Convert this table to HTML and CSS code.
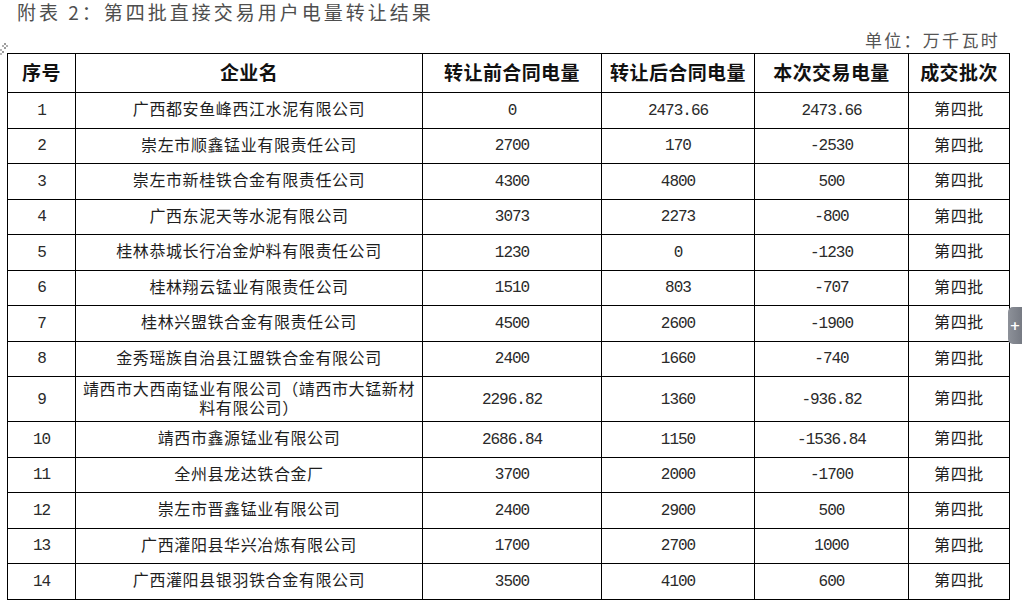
FILE: index.html
```html
<!DOCTYPE html>
<html lang="zh-CN">
<head>
<meta charset="utf-8">
<title>附表2</title>
<link rel="stylesheet" href="styles.css">
</head>
<body>
<div class="page">
  <h1 class="title">附表 2：第四批直接交易用户电量转让结果</h1>
  <div class="unit">单位：万千瓦时</div>
  <div class="table-wrap">
    <span class="handle" aria-hidden="true">
      <svg width="10" height="18" viewBox="0 0 10 18">
        <rect x="4" y="2" width="2" height="2" fill="#9a9a9a"/>
        <rect x="2" y="4" width="2" height="2" fill="#b0b0b0"/>
        <rect x="6" y="4" width="2" height="2" fill="#b0b0b0"/>
        <rect x="4" y="6" width="2" height="2" fill="#9a9a9a"/>
        <rect x="0" y="8" width="2" height="2" fill="#b8b8b8"/>
        <rect x="2" y="10" width="2" height="2" fill="#9a9a9a"/>
        <rect x="0" y="12" width="2" height="2" fill="#b8b8b8"/>
      </svg>
    </span>
    <table class="grid">
      <colgroup>
        <col class="c-no"><col class="c-name"><col class="c-pre"><col class="c-post"><col class="c-deal"><col class="c-batch">
      </colgroup>
      <thead>
        <tr><th>序号</th><th>企业名</th><th>转让前合同电量</th><th>转让后合同电量</th><th>本次交易电量</th><th>成交批次</th></tr>
      </thead>
      <tbody>
        <tr><td class="num">1</td><td>广西都安鱼峰西江水泥有限公司</td><td class="num">0</td><td class="num">2473.66</td><td class="num">2473.66</td><td>第四批</td></tr>
        <tr><td class="num">2</td><td>崇左市顺鑫锰业有限责任公司</td><td class="num">2700</td><td class="num">170</td><td class="num">-2530</td><td>第四批</td></tr>
        <tr><td class="num">3</td><td>崇左市新桂铁合金有限责任公司</td><td class="num">4300</td><td class="num">4800</td><td class="num">500</td><td>第四批</td></tr>
        <tr><td class="num">4</td><td>广西东泥天等水泥有限公司</td><td class="num">3073</td><td class="num">2273</td><td class="num">-800</td><td>第四批</td></tr>
        <tr><td class="num">5</td><td>桂林恭城长行冶金炉料有限责任公司</td><td class="num">1230</td><td class="num">0</td><td class="num">-1230</td><td>第四批</td></tr>
        <tr><td class="num">6</td><td>桂林翔云锰业有限责任公司</td><td class="num">1510</td><td class="num">803</td><td class="num">-707</td><td>第四批</td></tr>
        <tr><td class="num">7</td><td>桂林兴盟铁合金有限责任公司</td><td class="num">4500</td><td class="num">2600</td><td class="num">-1900</td><td>第四批</td></tr>
        <tr><td class="num">8</td><td>金秀瑶族自治县江盟铁合金有限公司</td><td class="num">2400</td><td class="num">1660</td><td class="num">-740</td><td>第四批</td></tr>
        <tr class="tall"><td class="num">9</td><td class="wrap">靖西市大西南锰业有限公司（靖西市大锰新材料有限公司）</td><td class="num">2296.82</td><td class="num">1360</td><td class="num">-936.82</td><td>第四批</td></tr>
        <tr><td class="num">10</td><td>靖西市鑫源锰业有限公司</td><td class="num">2686.84</td><td class="num">1150</td><td class="num">-1536.84</td><td>第四批</td></tr>
        <tr><td class="num">11</td><td>全州县龙达铁合金厂</td><td class="num">3700</td><td class="num">2000</td><td class="num">-1700</td><td>第四批</td></tr>
        <tr><td class="num">12</td><td>崇左市晋鑫锰业有限公司</td><td class="num">2400</td><td class="num">2900</td><td class="num">500</td><td>第四批</td></tr>
        <tr><td class="num">13</td><td>广西灌阳县华兴冶炼有限公司</td><td class="num">1700</td><td class="num">2700</td><td class="num">1000</td><td>第四批</td></tr>
        <tr><td class="num">14</td><td>广西灌阳县银羽铁合金有限公司</td><td class="num">3500</td><td class="num">4100</td><td class="num">600</td><td>第四批</td></tr>
      </tbody>
    </table>
  </div>
  <div class="side-tab" aria-hidden="true">+</div>
</div>
</body>
</html>
```

FILE: styles.css
```css
* { box-sizing: border-box; }

html, body {
  margin: 0;
  padding: 0;
  background: #ffffff;
}

body {
  font-family: "Noto Sans CJK SC", "Noto Sans", sans-serif;
  color: #1a1a1a;
  width: 1022px;
  height: 613px;
  overflow: hidden;
}

.page {
  position: relative;
  width: 1022px;
  height: 613px;
}

.title {
  margin: 0;
  padding-left: 17px;
  font-size: 19px;
  font-weight: normal;
  line-height: 23px;
  letter-spacing: 3px;
  color: #4e4e4e;
}

.unit {
  margin-top: 7px;
  padding-right: 22px;
  text-align: right;
  font-size: 17px;
  line-height: 20px;
  letter-spacing: 2.3px;
  color: #555;
}

.table-wrap {
  position: relative;
  margin-top: 3px;
  padding-left: 7px;
}

.handle {
  position: absolute;
  left: 0;
  top: -13px;
  width: 10px;
  height: 18px;
}

.grid {
  border-collapse: collapse;
  table-layout: fixed;
  width: 1002px;
}

.c-no { width: 68px; }
.c-name { width: 347px; }
.c-pre { width: 179px; }
.c-post { width: 153px; }
.c-deal { width: 154px; }
.c-batch { width: 101px; }

.grid th,
.grid td {
  border: 1px solid #000;
  padding: 0 3px 3px;
  text-align: center;
  vertical-align: middle;
  white-space: nowrap;
}

.grid thead tr { height: 39px; }

.grid th {
  font-size: 19px;
  font-weight: bold;
  color: #111;
  letter-spacing: 0.4px;
}

.grid tbody tr { height: 35.5px; }
.grid tbody tr.tall { height: 45px; }

.grid td {
  font-size: 16px;
  letter-spacing: 0.6px;
  line-height: 19px;
  color: #1e1e1e;
}

.grid td.wrap {
  white-space: normal;
  padding: 0 2px 3px;
}

.grid td.num {
  font-family: "Liberation Mono", "DejaVu Sans Mono", monospace;
  font-size: 16px;
  letter-spacing: -1px;
  padding-top: 2px;
  padding-bottom: 0;
  color: #2a2a2a;
}

.side-tab {
  position: absolute;
  right: 0;
  top: 307px;
  width: 14px;
  height: 37px;
  border-radius: 5px 0 0 5px;
  background: linear-gradient(90deg, #8d9199 0%, #767a83 100%);
  color: #fff;
  font-family: "DejaVu Sans", sans-serif;
  font-size: 13px;
  font-weight: bold;
  line-height: 37px;
  text-align: center;
}
```
